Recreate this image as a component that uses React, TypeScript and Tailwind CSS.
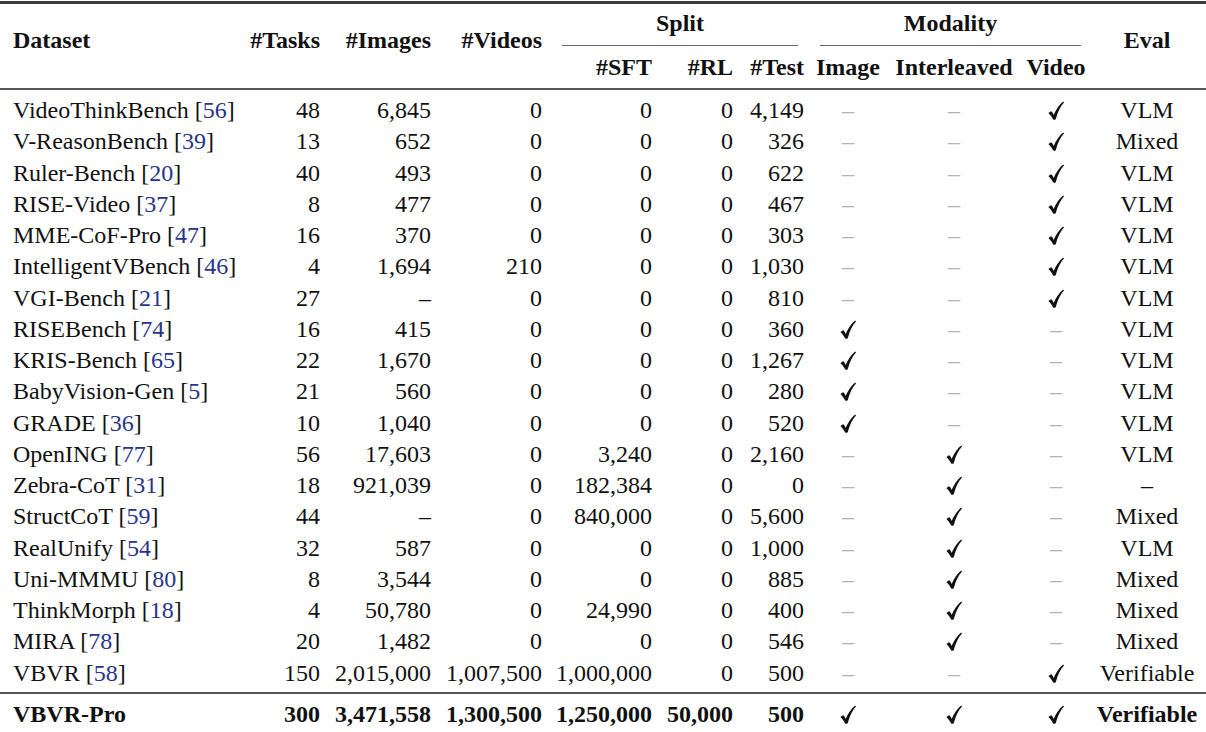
import React from "react"

type Mark = "c" | "d"
type Row = [string, string, string, string, string, string, string, string, Mark, Mark, Mark, string]

const rows: Row[] = [
  ["VideoThinkBench", "56", "48", "6,845", "0", "0", "0", "4,149", "d", "d", "c", "VLM"],
  ["V-ReasonBench", "39", "13", "652", "0", "0", "0", "326", "d", "d", "c", "Mixed"],
  ["Ruler-Bench", "20", "40", "493", "0", "0", "0", "622", "d", "d", "c", "VLM"],
  ["RISE-Video", "37", "8", "477", "0", "0", "0", "467", "d", "d", "c", "VLM"],
  ["MME-CoF-Pro", "47", "16", "370", "0", "0", "0", "303", "d", "d", "c", "VLM"],
  ["IntelligentVBench", "46", "4", "1,694", "210", "0", "0", "1,030", "d", "d", "c", "VLM"],
  ["VGI-Bench", "21", "27", "–", "0", "0", "0", "810", "d", "d", "c", "VLM"],
  ["RISEBench", "74", "16", "415", "0", "0", "0", "360", "c", "d", "d", "VLM"],
  ["KRIS-Bench", "65", "22", "1,670", "0", "0", "0", "1,267", "c", "d", "d", "VLM"],
  ["BabyVision-Gen", "5", "21", "560", "0", "0", "0", "280", "c", "d", "d", "VLM"],
  ["GRADE", "36", "10", "1,040", "0", "0", "0", "520", "c", "d", "d", "VLM"],
  ["OpenING", "77", "56", "17,603", "0", "3,240", "0", "2,160", "d", "c", "d", "VLM"],
  ["Zebra-CoT", "31", "18", "921,039", "0", "182,384", "0", "0", "d", "c", "d", "–"],
  ["StructCoT", "59", "44", "–", "0", "840,000", "0", "5,600", "d", "c", "d", "Mixed"],
  ["RealUnify", "54", "32", "587", "0", "0", "0", "1,000", "d", "c", "d", "VLM"],
  ["Uni-MMMU", "80", "8", "3,544", "0", "0", "0", "885", "d", "c", "d", "Mixed"],
  ["ThinkMorph", "18", "4", "50,780", "0", "24,990", "0", "400", "d", "c", "d", "Mixed"],
  ["MIRA", "78", "20", "1,482", "0", "0", "0", "546", "d", "c", "d", "Mixed"],
  ["VBVR", "58", "150", "2,015,000", "1,007,500", "1,000,000", "0", "500", "d", "d", "c", "Verifiable"],
]

const cols = "grid grid-cols-[240px_80px_111px_111px_110px_81px_71px_88px_124px_80px_110px]"

function Check() {
  return (
    <svg width="16" height="19" viewBox="0 0 16 19" className="block">
      <path
        d="M0.5 12.2C1.5 10.8 2.8 10.2 3.6 10.6C4.4 11.2 5 12.6 5.6 14C8 8.5 11.5 3.5 15.2 0.6L16 1.6C12.6 5.2 9.8 10.8 7.8 18C7.3 19 5.6 19.2 5 18.2C3.8 15.8 2.4 13.8 0.5 12.2Z"
        fill="#111"
      />
    </svg>
  )
}

function MarkCell({ m }: { m: Mark }) {
  return (
    <div className="flex items-center justify-center">
      {m === "c" ? <Check /> : <span className="text-[#b4b4b4]">–</span>}
    </div>
  )
}

export default function App() {
  return (
    <div className="w-[1206px] h-[732px] overflow-hidden bg-white text-[#111] text-[24px] font-['Liberation_Serif','Times_New_Roman',serif]">
      <div className="mt-[1px] border-t-[3px] border-[#3a3a3a]" />

      {/* header */}
      <div className={`${cols} grid-rows-[42px_42px] font-bold leading-none`}>
        <div className="row-span-2 flex items-center pl-[13px] pb-[12px]">Dataset</div>
        <div className="row-span-2 flex items-center justify-end pb-[12px]">#Tasks</div>
        <div className="row-span-2 flex items-center justify-end pb-[12px]">#Images</div>
        <div className="row-span-2 flex items-center justify-end pb-[12px]">#Videos</div>
        <div className="col-span-3 flex items-end pl-[20px] pr-[6px]">
          <div className="flex-1 h-full flex items-center justify-center pb-[4px] border-b-[1.5px] border-[#666]">Split</div>
        </div>
        <div className="col-span-3 flex items-end pl-[16px] pr-[15px]">
          <div className="flex-1 h-full flex items-center justify-center pb-[4px] border-b-[1.5px] border-[#666]">Modality</div>
        </div>
        <div className="row-span-2 flex items-center justify-center pr-[8px] pb-[12px]">Eval</div>
        <div className="flex items-center justify-end">#SFT</div>
        <div className="flex items-center justify-end">#RL</div>
        <div className="flex items-center justify-end">#Test</div>
        <div className="flex items-center justify-center">Image</div>
        <div className="flex items-center justify-center">Interleaved</div>
        <div className="flex items-center justify-center">Video</div>
      </div>

      <div className="border-t-2 border-[#555]" />

      {/* body */}
      <div className="pt-[5px] pb-[3px]">
        {rows.map((r) => (
          <div key={r[0]} className={`${cols} h-[31.25px] leading-[31.25px]`}>
            <div className="pl-[13px] whitespace-nowrap">
              {r[0]} [<span className="text-[#28348a]">{r[1]}</span>]
            </div>
            <div className="text-right">{r[2]}</div>
            <div className="text-right">{r[3]}</div>
            <div className="text-right">{r[4]}</div>
            <div className="text-right">{r[5]}</div>
            <div className="text-right">{r[6]}</div>
            <div className="text-right">{r[7]}</div>
            <MarkCell m={r[8]} />
            <MarkCell m={r[9]} />
            <MarkCell m={r[10]} />
            <div className="text-center pr-[8px]">{r[11]}</div>
          </div>
        ))}
      </div>

      <div className="border-t-2 border-[#555]" />

      <div className={`${cols} h-[31.25px] leading-[31.25px] mt-[5px] font-bold`}>
        <div className="pl-[13px]">VBVR-Pro</div>
        <div className="text-right">300</div>
        <div className="text-right">3,471,558</div>
        <div className="text-right">1,300,500</div>
        <div className="text-right">1,250,000</div>
        <div className="text-right">50,000</div>
        <div className="text-right">500</div>
        <MarkCell m="c" />
        <MarkCell m="c" />
        <MarkCell m="c" />
        <div className="text-center pr-[8px]">Verifiable</div>
      </div>
    </div>
  )
}
